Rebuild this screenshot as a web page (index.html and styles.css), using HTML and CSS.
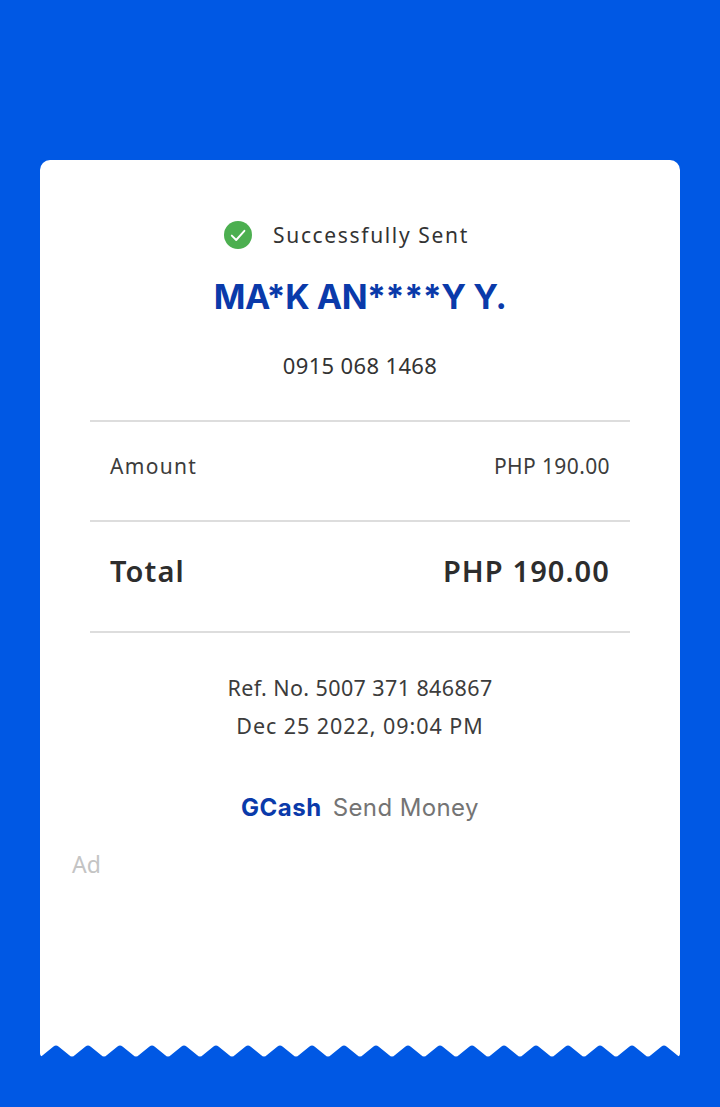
FILE: index.html
```html
<!DOCTYPE html>
<html lang="en">
<head>
<meta charset="utf-8">
<title>GCash Receipt</title>
<link rel="stylesheet" href="styles.css">
</head>
<body>
<main class="receipt">
  <div class="content">
    <div class="status">
      <svg class="check" viewBox="0 0 28 28" aria-hidden="true">
        <circle cx="14" cy="14" r="14" fill="#4caf50"/>
        <path d="M7.8 14.6l4.4 4.4 8.2-9.2" fill="none" stroke="#fff" stroke-width="1.9" stroke-linecap="round" stroke-linejoin="round"/>
      </svg>
      <span class="status-text">Successfully Sent</span>
    </div>
    <h1 class="name">MA*K AN****Y Y.</h1>
    <p class="phone">0915 068 1468</p>
    <div class="rows">
      <div class="row row-amount"><span class="amount-label">Amount</span><span class="amount-value">PHP 190.00</span></div>
      <div class="row row-total"><span class="total-label">Total</span><span class="total-value">PHP 190.00</span></div>
    </div>
    <div class="meta">
      <p class="ref">Ref. No. 5007 371 846867</p>
      <p class="date">Dec 25 2022, 09:04 PM</p>
    </div>
    <div class="brand"><strong>GCash</strong><span>Send Money</span></div>
    <div class="ad">Ad</div>
  </div>
  <svg class="wave" width="640" height="12" aria-hidden="true">
    <defs>
      <pattern id="tooth" width="32" height="12" patternUnits="userSpaceOnUse">
        <path d="M0 0V11.5Q1.5 11.5 3 10L13.5 1.5Q16 -.5 18.5 1.5L29 10Q30.5 11.5 32 11.5V0Z" fill="#fff"/>
      </pattern>
    </defs>
    <rect width="640" height="12" fill="url(#tooth)"/>
  </svg>
</main>
</body>
</html>
```
FILE: styles.css
```css
* { box-sizing: border-box; }
html, body { margin: 0; padding: 0; }
body {
  height: 1107px;
  background: #0058e4;
  padding: 160px 40px 0;
  overflow: hidden;
  font-family: "Noto Sans", "Liberation Sans", sans-serif;
  color: #2f2f2f;
}
.receipt { width: 640px; }
.content {
  height: 885px;
  background: #fff;
  border-radius: 10px 10px 0 0;
  padding: 61px 50px 0;
}
.wave { display: block; border-radius: 0 0 4px 4px; }
.status {
  display: flex;
  align-items: center;
  justify-content: center;
  gap: 21px;
  height: 28px;
  margin-right: 27px;
}
.check { width: 28px; height: 28px; flex: none; }
.status-text { font-size: 21px; letter-spacing: 1.65px; color: #333; }
.name {
  margin: 26px 0 0;
  height: 44px;
  line-height: 44px;
  text-align: center;
  font-family: Inter, sans-serif;
  font-size: 34px;
  font-weight: 700;
  letter-spacing: -.47px;
  color: #0a3aaa;
}
.phone {
  margin: 31px 0 0;
  height: 30px;
  line-height: 30px;
  text-align: center;
  font-size: 22px;
  letter-spacing: .35px;
  color: #333;
}
.rows { margin-top: 40px; border-top: 2px solid #ddd; }
.row {
  display: flex;
  justify-content: space-between;
  align-items: center;
  padding: 0 20px;
  border-bottom: 2px solid #ddd;
}
.row-amount { height: 100px; padding-bottom: 10px; font-size: 21px; color: #3c3c3c; }
.amount-label { letter-spacing: 1.3px; }
.amount-value { letter-spacing: .4px; }
.row-total {
  height: 111px;
  padding-bottom: 12px;
  font-size: 29px;
  font-weight: 600;
  color: #2d2d2d;
}
.total-label { letter-spacing: 1.1px; }
.total-value { letter-spacing: 1.1px; }
.meta {
  margin-top: 36px;
  text-align: center;
  font-size: 21.5px;
  line-height: 38px;
  color: #3c3c3c;
}
.meta p { margin: 0; }
.ref { letter-spacing: .4px; }
.date { letter-spacing: .95px; }
.brand {
  display: flex;
  justify-content: center;
  align-items: baseline;
  gap: 11px;
  margin-top: 45px;
  height: 36px;
  line-height: 36px;
  font-family: Inter, sans-serif;
  font-size: 24px;
}
.brand strong { font-weight: 700; color: #0a3aaa; letter-spacing: .5px; }
.brand span { color: #747474; letter-spacing: .4px; }
.ad {
  margin: 23px 0 0 -18px;
  font-size: 23px;
  line-height: 30px;
  color: #c4c4c4;
}
```
